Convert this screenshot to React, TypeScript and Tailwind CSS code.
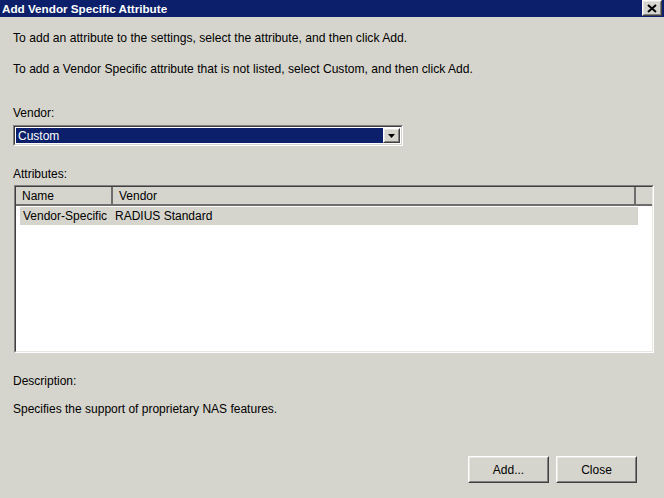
import React from "react";

function Raised({ children, className = "" }: { children: React.ReactNode; className?: string }) {
  return (
    <div className={"border border-t-white border-l-white border-r-[#404040] border-b-[#404040] " + className}>
      <div className="h-full w-full border border-t-[#e8e7e1] border-l-[#e8e7e1] border-r-[#808080] border-b-[#808080] bg-[#d6d5cd] flex items-center justify-center">
        {children}
      </div>
    </div>
  );
}

export default function App() {
  return (
    <div className="w-[664px] h-[498px] bg-[#d6d5cd] text-[#000] text-[12px] leading-none overflow-hidden flex flex-col" style={{ fontFamily: '"Liberation Sans", Arial, sans-serif' }}>
      {/* title bar */}
      <div className="h-[17px] bg-[#0b1f6b] flex items-center justify-between pl-[2px] pr-[2px] shrink-0">
        <span className="text-white font-bold text-[11.7px]">Add Vendor Specific Attribute</span>
        <Raised className="w-[20px] h-[16px] -mt-[1px]">
          <svg width="10" height="9" viewBox="0 0 10 9">
            <path d="M1 1 L9 8 M9 1 L1 8" stroke="#000" strokeWidth="2" />
          </svg>
        </Raised>
      </div>

      <div className="flex flex-col pl-[13px] pr-[11px] pt-[14px]">
        <div className="h-[14px] flex items-center text-[12.15px]">To add an attribute to the settings, select the attribute, and then click Add.</div>
        <div className="h-[14px] mt-[17px] flex items-center text-[12.1px]">To add a Vendor Specific attribute that is not listed, select Custom, and then click Add.</div>

        <div className="h-[14px] mt-[30px] flex items-center">Vendor:</div>
        <div className="mt-[5px] w-[390px] h-[21px] border border-t-[#808080] border-l-[#808080] border-r-white border-b-white">
          <div className="h-full border border-t-[#404040] border-l-[#404040] border-r-[#d6d5cd] border-b-[#d6d5cd] bg-white flex items-center p-[1px]">
            <div className="flex-1 h-full bg-[#0b1f6b] text-white flex items-center pl-[2px]">Custom</div>
            <Raised className="w-[17px] h-full">
              <svg width="7" height="4" viewBox="0 0 7 4">
                <path d="M0 0 H7 L3.5 4 Z" fill="#000" />
              </svg>
            </Raised>
          </div>
        </div>

        <div className="h-[14px] mt-[21px] flex items-center">Attributes:</div>
        <div className="mt-[4px] ml-[1px] w-[640px] h-[168px] border border-t-[#808080] border-l-[#808080] border-r-white border-b-white">
          <div className="h-full border border-t-[#404040] border-l-[#404040] border-r-[#e8e7e1] border-b-[#e8e7e1] bg-white flex flex-col">
            <div className="flex h-[19px] shrink-0">
              <div className="w-[97px] h-full border-r-2 border-b-2 border-[#6e6e6e] bg-[#d6d5cd] flex items-center pl-[6px]">Name</div>
              <div className="w-[523px] h-full border-r-2 border-b-2 border-[#6e6e6e] bg-[#d6d5cd] flex items-center pl-[6px]">Vendor</div>
              <div className="flex-1 h-full border-b-2 border-[#6e6e6e] bg-[#d6d5cd]"></div>
            </div>
            <div className="flex h-[18px] mt-[1px] ml-[4px] w-[618px] bg-[#d6d5cd] items-center">
              <div className="w-[93px] pl-[3px]">Vendor-Specific</div>
              <div className="pl-[2px]">RADIUS Standard</div>
            </div>
          </div>
        </div>

        <div className="h-[14px] mt-[21px] flex items-center">Description:</div>
        <div className="h-[14px] mt-[14px] flex items-center">Specifies the support of proprietary NAS features.</div>

        <div className="flex justify-end gap-[7px] mt-[40px] pr-[16px]">
          <Raised className="w-[81px] h-[27px]">Add...</Raised>
          <Raised className="w-[81px] h-[27px]">Close</Raised>
        </div>
      </div>
    </div>
  );
}
